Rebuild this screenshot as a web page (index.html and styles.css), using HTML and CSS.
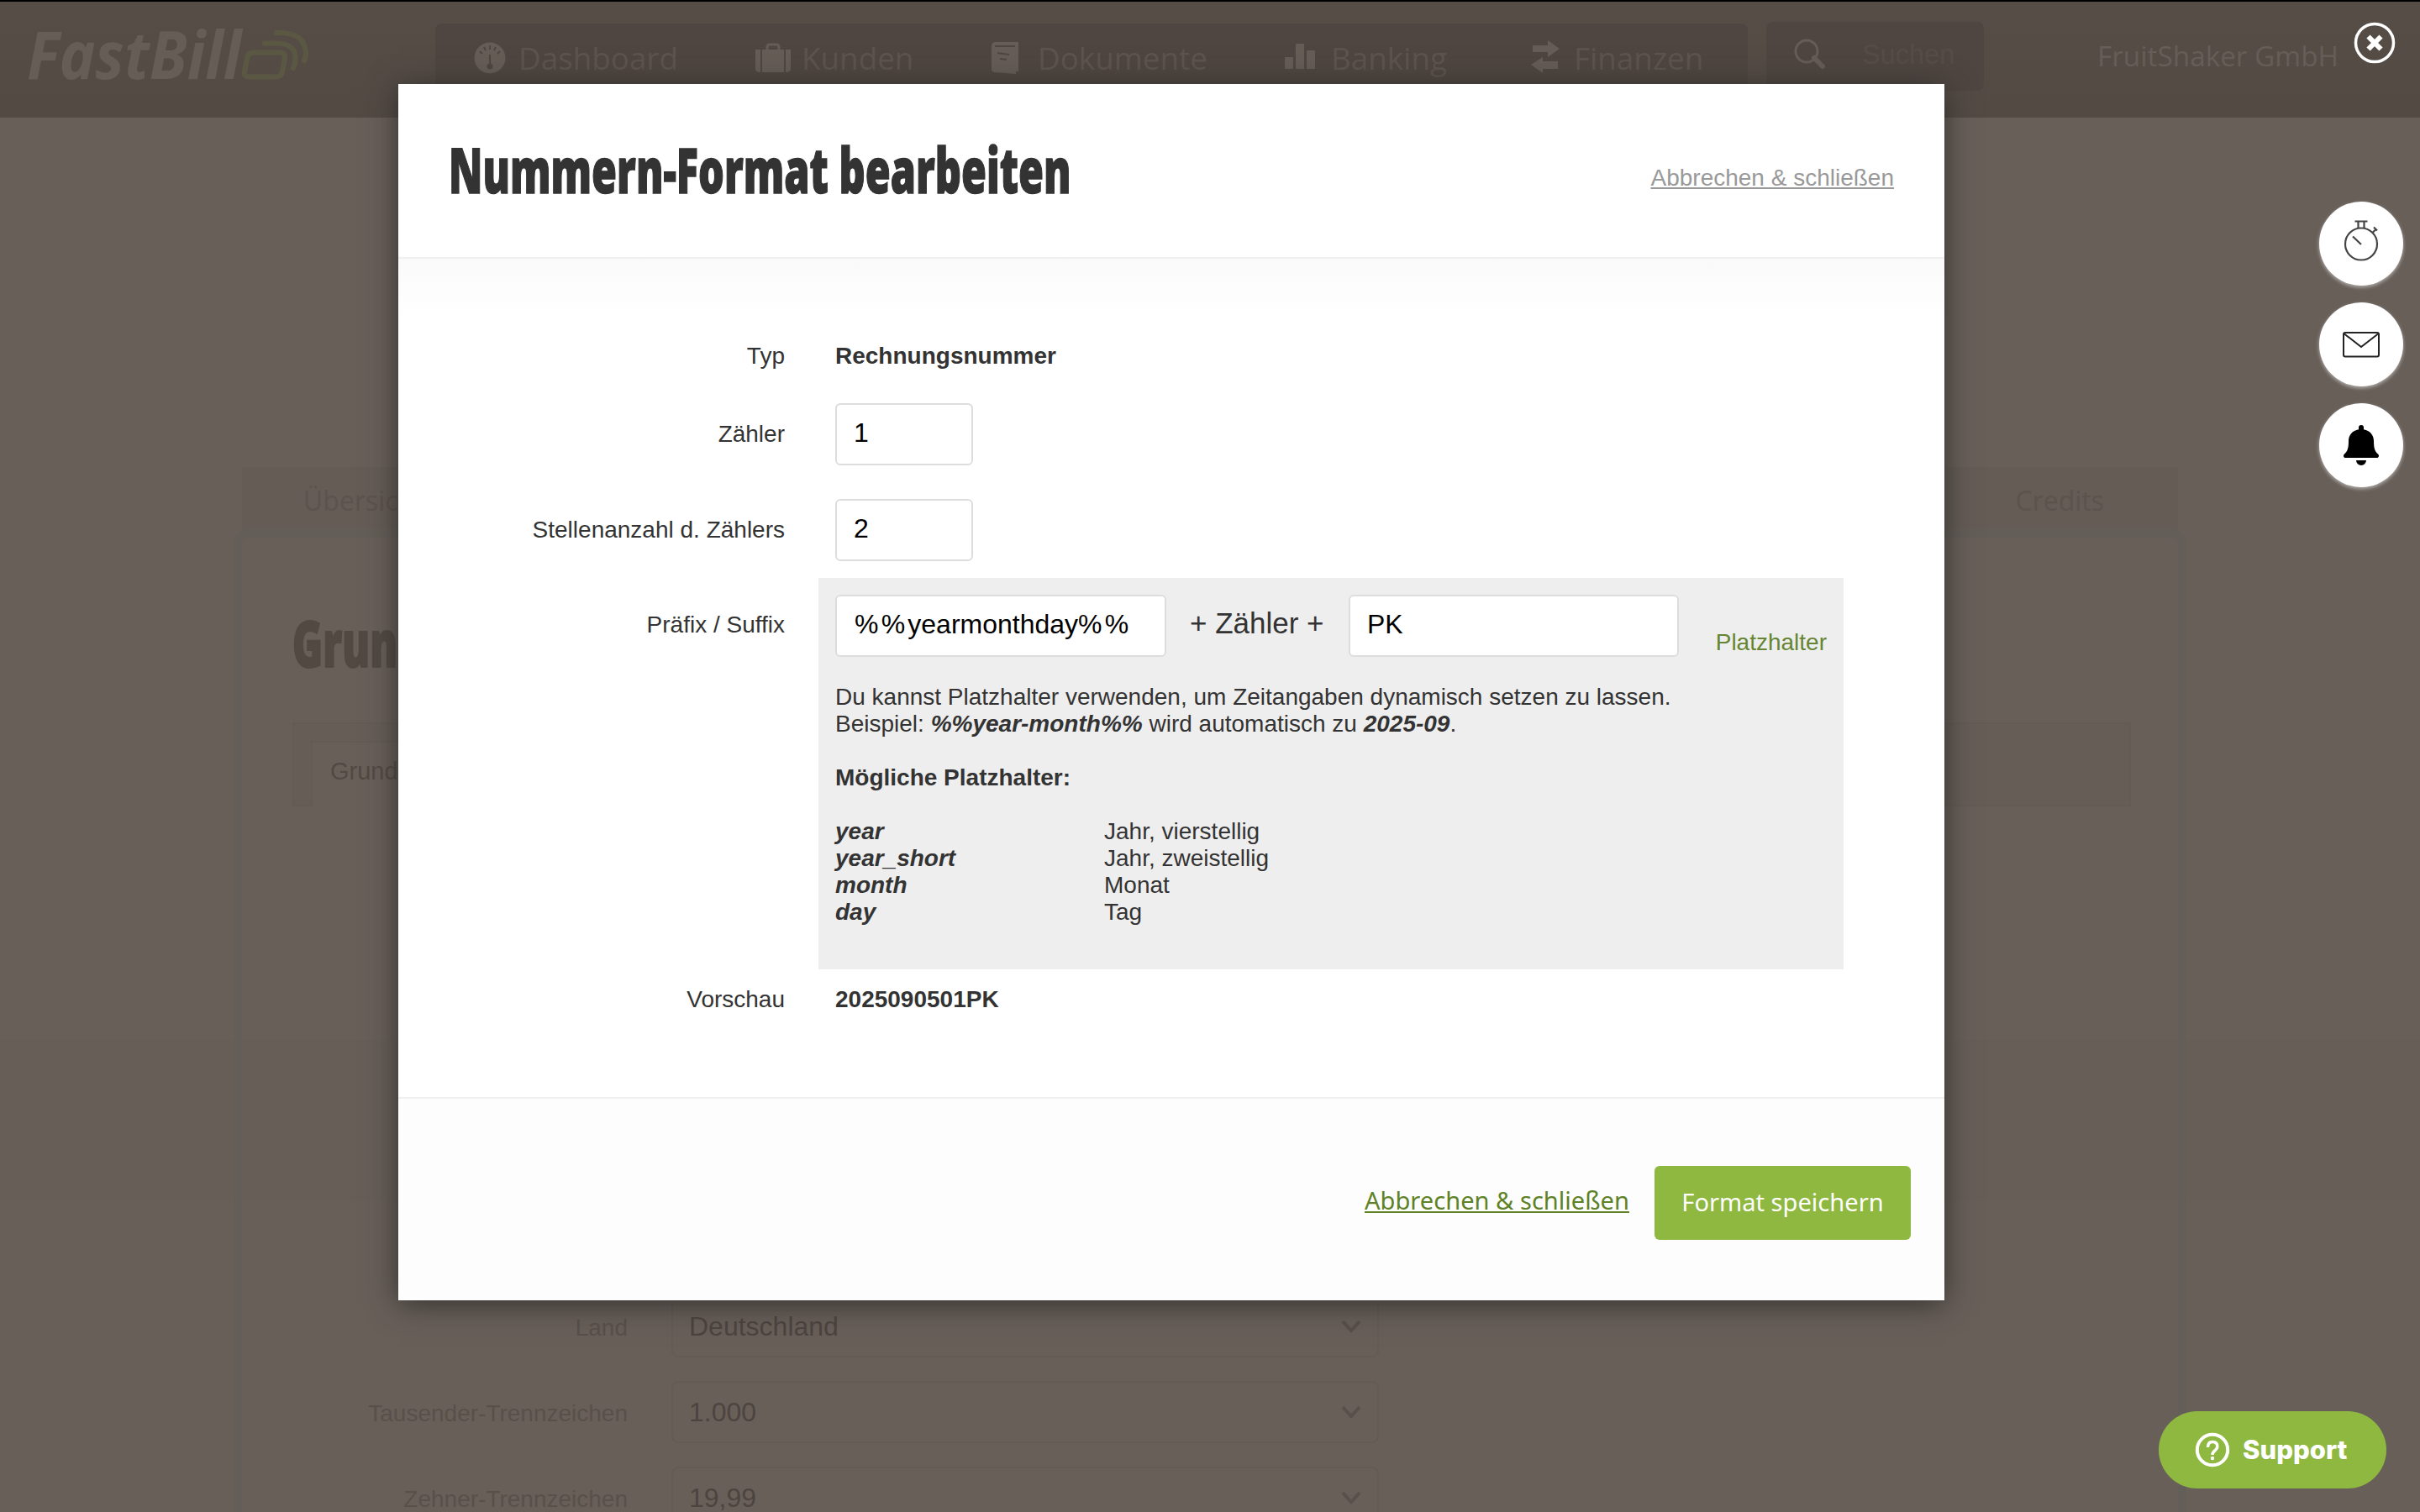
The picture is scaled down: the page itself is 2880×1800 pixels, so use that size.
FILE: index.html
```html
<!DOCTYPE html>
<html lang="de">
<head>
<meta charset="utf-8">
<title>FastBill – Nummern-Format bearbeiten</title>
<link rel="stylesheet" href="styles.css">
</head>
<body>
<div class="page">
  <header class="topbar">
    <div class="logo">
      <span class="logo-box"><span class="logo-text">FastBill</span></span>
      <svg class="logo-mark" width="84" height="64" viewBox="0 0 84 64" fill="none" stroke="#5a5842" stroke-width="6.200" stroke-linecap="round">
        <path d="M15 29.500h31q7 0 6 7l-3 16q-1 6-8 6H10q-7 0-6-6l3-16q1-7 8-7z"/>
        <path d="M28 18.500h13q25 0 23.500 20-.5 6-2.500 9.500"/><path d="M42 6h8q26 2 27 24 0 6-2 9"/>
      </svg>
    </div>
    <nav class="mainnav">
      <a class="nav-item n1"><svg width="38" height="38" viewBox="0 0 38 38"><circle cx="19" cy="19" r="18.500" fill="#665d57"/><g stroke="#4f4641" stroke-width="2"><path d="M19 4v5M12 6l2 4M26 6l-2 4M7 11l3 3M31 11l-3 3M19 15v14"/></g><circle cx="19" cy="29" r="3.500" fill="#4f4641"/></svg><span>Dashboard</span></a>
      <a class="nav-item n2"><svg width="42" height="38" viewBox="0 0 42 38" fill="#665d57"><path d="M0 9h6v27H5q-5 0-5-4zM8 9h26v27H8zM36 9h6v23q0 4-5 4h-1z"/><path d="M14 9V6q0-3 3-3h8q3 0 3 3v3" fill="none" stroke="#665d57" stroke-width="3"/></svg><span>Kunden</span></a>
      <a class="nav-item n3"><svg width="32" height="38" viewBox="0 0 32 38"><path d="M5 0h27v35h-3v3L4 36q-4 0-4-4V5q0-5 5-5z" fill="#665d57"/><path d="M4 5l24 0M7 13l14 2M10 20l8 1" stroke="#4f4641" stroke-width="2"/></svg><span>Dokumente</span></a>
      <a class="nav-item n4"><svg width="36" height="38" viewBox="0 0 36 38" fill="#665d57"><rect y="18" width="10" height="14" rx="1"/><rect x="13" y="2" width="10" height="30" rx="1"/><rect x="26" y="10" width="10" height="22" rx="1"/></svg><span>Banking</span></a>
      <a class="nav-item n5"><svg width="34" height="40" viewBox="0 0 34 40" fill="#665d57"><path d="M2 6h18V0l14 10-14 10v-6H2zM32 25H14v-5L0 29l14 10v-5h18z"/></svg><span>Finanzen</span></a>
    </nav>
    <div class="search">
      <svg width="38" height="38" viewBox="0 0 38 38" fill="none" stroke="#665d57"><circle cx="15" cy="15" r="13" stroke-width="3"/><path d="M24 23l10 10" stroke-width="6" stroke-linecap="round"/></svg>
      <span>Suchen</span>
    </div>
    <span class="account">FruitShaker GmbH</span>
  </header>

  <main class="panel-wrap">
    <div class="tabs"><span>Übersicht</span><span>Credits</span></div>
    <section class="panel">
      <h1 class="panel-title"><span>Grunddaten</span></h1>
      <div class="subtabs"><span class="subtab">Grunddaten</span></div>
      <div class="settings">
        <label>Land</label><div class="select">Deutschland<svg width="26" height="16" viewBox="0 0 26 16"><path d="M3 2l10 11L23 2"/></svg></div>
        <label>Tausender-Trennzeichen</label><div class="select">1.000<svg width="26" height="16" viewBox="0 0 26 16"><path d="M3 2l10 11L23 2"/></svg></div>
        <label>Zehner-Trennzeichen</label><div class="select">19,99<svg width="26" height="16" viewBox="0 0 26 16"><path d="M3 2l10 11L23 2"/></svg></div>
      </div>
    </section>
  </main>
</div>

<div class="modal">
  <div class="modal-head">
    <h2 class="modal-title"><span>Nummern-Format bearbeiten</span></h2>
    <a class="head-cancel">Abbrechen &amp; schließen</a>
  </div>
  <div class="modal-body">
    <div class="row"><label>Typ</label><div class="field"><b>Rechnungsnummer</b></div></div>
    <div class="row"><label>Zähler</label><div class="field"><div class="input small">1</div></div></div>
    <div class="row tall"><label>Stellenanzahl d. Zählers</label><div class="field"><div class="input small">2</div></div></div>
    <div class="row prefix-row">
      <label>Präfix / Suffix</label>
      <div class="box">
        <div class="box-inputs">
          <div class="input prefix"><span class="pct">%%</span>yearmonthday<span class="pct">%%</span></div>
          <span class="plus">+ Zähler +</span>
          <div class="input suffix">PK</div>
          <a class="placeholder-link">Platzhalter</a>
        </div>
        <p>Du kannst Platzhalter verwenden, um Zeitangaben dynamisch setzen zu lassen.<br>Beispiel: <b><i>%%year-month%%</i></b> wird automatisch zu <b><i>2025-09</i></b>.</p>
        <p><b>Mögliche Platzhalter:</b></p>
        <dl>
          <dt>year</dt><dd>Jahr, vierstellig</dd>
          <dt>year_short</dt><dd>Jahr, zweistellig</dd>
          <dt>month</dt><dd>Monat</dd>
          <dt>day</dt><dd>Tag</dd>
        </dl>
      </div>
    </div>
    <div class="row preview"><label>Vorschau</label><div class="field"><b>2025090501PK</b></div></div>
  </div>
  <div class="modal-foot">
    <a class="foot-cancel">Abbrechen &amp; schließen</a>
    <div class="save">Format speichern</div>
  </div>
</div>

<svg class="close" width="52" height="52" viewBox="0 0 52 52" fill="none" stroke="#fff"><circle cx="26" cy="26" r="22.500" stroke-width="3.500"/><path d="M18.500 18.500l15 15M33.500 18.500l-15 15" stroke-width="6"/></svg>

<aside class="floaters">
  <div class="fab"><svg class="watch" width="46" height="52" viewBox="0 0 46 52" fill="none" stroke="#444" stroke-width="2.200"><circle cx="23" cy="28.500" r="19"/><path d="M15.500 1.500h15M19.500 2v8M26.500 2v8M23 29L13 19.500M36.500 15l4-4M38 8.500l4 4"/></svg></div>
  <div class="fab"><svg width="46" height="32" viewBox="0 0 46 32" fill="none" stroke="#222" stroke-width="2"><rect x="2" y="2" width="42" height="28.500" rx="2"/><path d="M3 3.500l20 15.500L43 3.500"/></svg></div>
  <div class="fab"><svg width="42" height="48" viewBox="0 0 42 48"><path d="M21 0a3 3 0 0 1 3 3v2.200C31.500 6.500 36 12 36 19c0 8 1 12 5 15.500 2 2 .8 4.500-1.500 4.500h-37C.2 39-1 36.500 1 34.500 5 31 6 27 6 19 6 12 10.500 6.500 18 5.200V3a3 3 0 0 1 3-3zM15 42h12a6 6 0 0 1-12 0z"/></svg></div>
</aside>

<div class="support">
  <svg width="42" height="42" viewBox="0 0 42 42" fill="none" stroke="#fff"><circle cx="21" cy="21" r="18.200" stroke-width="4"/><path d="M15.500 18q0-6.500 5.700-6.500 5.600 0 5.600 5.500 0 2.500-3 5-2.800 2.200-2.800 5" stroke-width="3.500"/><circle cx="21" cy="31" r="2.200" fill="#fff" stroke="none"/></svg>
  <span>Support</span>
</div>
</body>
</html>
```
FILE: styles.css
```css
* { box-sizing: border-box; }
html, body { margin: 0; width: 2880px; height: 1800px; overflow: hidden; }
body {
  position: relative;
  background: #685f59;
  color: #333;
  font: 28px/32px "Liberation Sans", Arial, sans-serif;
}
h1, h2, p, dl, dd { margin: 0; }
svg { display: block; flex: none; }
.page { height: 1800px; overflow: hidden; background: linear-gradient(#685f59 0 1239px, #665d57 1239px 1241px, #675e58 1241px 1430px, #685f59 1430px); }

.topbar {
  display: flex;
  height: 140px;
  padding: 26px 0 0 32px;
  border-top: 2px solid #000;
  background: linear-gradient(#564d47, #534a44);
  font-family: "Open Sans", "Noto Sans", sans-serif;
}
.logo { display: flex; width: 486px; height: 80px; padding-top: 4px; }
.logo-box { width: 255px; height: 64px; line-height: 64px; }
.logo-text {
  display: inline-block;
  color: #665d57;
  font-size: 78px;
  font-style: italic;
  font-weight: 700;
  white-space: nowrap;
  transform-origin: 0 50%;
  transform: scaleX(.93);
}
.logo-mark { margin-top: 1px; }
.mainnav {
  display: flex;
  width: 1562px;
  height: 90px;
  border-radius: 8px;
  background: #4f4641;
}
.nav-item { display: flex; color: #5d544e; font-size: 36.800px; line-height: 82px; white-space: nowrap; }
.nav-item svg { margin-top: 22px; }
.n1 { width: 335px; padding-left: 46px; gap: 15px; }
.n2 { width: 280px; padding-left: 46px; gap: 13px; }
.n3 { width: 350px; padding-left: 47px; gap: 23px; }
.n4 { width: 293px; padding-left: 46px; gap: 19px; }
.n5 { padding-left: 46px; gap: 17px; }
.n5 svg { margin-top: 20px; }
.search {
  display: flex;
  width: 259px;
  height: 82px;
  margin: -2px 135px 0 22px;
  padding-left: 33px;
  gap: 43px;
  border-radius: 8px;
  background: #4f4641;
  color: #564d48;
  font-family: "Liberation Sans", Arial, sans-serif;
  font-size: 32.500px;
  line-height: 78px;
}
.search svg { margin-top: 20px; }
.account { color: #665d57; font-size: 33.300px; line-height: 76px; white-space: nowrap; }

.panel-wrap { width: 2304px; margin: 416px auto 0; }
.tabs {
  display: flex;
  justify-content: space-between;
  height: 84px;
  padding: 0 88px 0 73px;
  background: #655c56;
  color: #5c534d;
  font: 32px/80px "Open Sans", "Noto Sans", sans-serif;
}
.panel { height: 1200px; padding: 0 56px 0 60px; box-shadow: 0 0 0 10px #645e58; border-radius: 8px 8px 0 0; }
.panel-title { height: 220px; padding-top: 85px; font: 800 76px/80px "Open Sans", sans-serif; color: #524943; white-space: nowrap; }
.panel-title span { display: inline-block; transform: scaleX(.645); transform-origin: 0 50%; -webkit-text-stroke: 2px; }
.subtabs { height: 100px; padding: 20px 0 0 20px; border: 2px solid #645b55; background: #665d57; }
.subtab { display: block; width: 220px; height: 78px; padding: 18px 0 0 21px; border: solid #645b55; border-width: 2px 0 0 2px; background: #685f59; color: #524943; font-size: 29px; }
.settings { display: grid; grid-template-columns: 399px 842px; grid-auto-rows: 74px; gap: 28px 52px; margin-top: 582px; }
.settings label { color: #59504a; line-height: 78px; text-align: right; }
.select {
  display: flex;
  align-items: center;
  justify-content: space-between;
  padding: 0 18px 0 19px;
  border: 2px solid #645b55;
  border-radius: 8px;
  color: #4d443f;
  font-size: 32px;
}
.select svg { fill: none; stroke: #58504a; stroke-width: 4; }

.modal {
  position: absolute;
  left: 474px;
  top: 100px;
  width: 1840px;
  height: 1448px;
  background: #fff;
  box-shadow: 0 4px 34px rgba(44, 44, 42, .9);
}
.modal-head {
  display: flex;
  justify-content: space-between;
  height: 208px;
  padding: 0 60px;
  border-bottom: 2px solid #f0f0f0;
}
.modal-title { width: 740px; font: 800 74px/204px "Open Sans", sans-serif; white-space: nowrap; }
.modal-title span { display: inline-block; transform: scaleX(.656); transform-origin: 0 50%; -webkit-text-stroke: 1.500px; }
.head-cancel { margin-top: 96px; color: #999; text-decoration: underline; }
.modal-body {
  height: 998px;
  padding-top: 78px;
  background: linear-gradient(#fafafa, #fff 72px);
}
.row { display: grid; grid-template-columns: 460px 1fr; column-gap: 60px; line-height: 76px; height: 94px; }
.row label { text-align: right; line-height: 74px; }
.row:first-child label { line-height: 76px; }
.row.tall { margin-top: 20px; }
.input {
  height: 74px;
  padding-left: 20px;
  border: 2px solid #ddd;
  border-radius: 6px;
  background: #fff;
  color: #000;
  font-size: 32px;
  line-height: 67px;
}
.small { width: 164px; }
.prefix-row { height: 466px; column-gap: 40px; }
.prefix-row label { padding-top: 20px; line-height: 72px; }
.box { width: 1220px; height: 466px; padding: 20px; background: #eee; line-height: 32px; }
.box-inputs { display: flex; height: 106px; }
.prefix { width: 394px; padding-left: 21px; white-space: nowrap; }
.pct { letter-spacing: 3.200px; }
.plus { width: 218px; padding-left: 28px; font-size: 35px; line-height: 67px; white-space: nowrap; }
.suffix { width: 393px; margin-left: -1px; }
.placeholder-link { margin: 41px 0 0 auto; color: #668533; }
.box p { margin-bottom: 32px; white-space: nowrap; }
dl { display: grid; grid-template-columns: 320px 1fr; }
dt { font-weight: 700; font-style: italic; }
.preview, .preview label { line-height: 71px; }
.modal-foot {
  display: flex;
  justify-content: flex-end;
  height: 242px;
  padding: 80px 40px 0;
  gap: 30px;
  border-top: 2px solid #f0f0f0;
  background: #fdfdfd;
  font: 29.100px/86px "Noto Sans", sans-serif;
  white-space: nowrap;
}
.foot-cancel { color: #5e8225; line-height: 83px; text-decoration: underline; }
.save { width: 305px; height: 88px; border-radius: 6px; background: #8fb840; color: #fff; text-align: center; }

.close { position: absolute; left: 2800px; top: 25px; }
.floaters { position: absolute; left: 2760px; top: 240px; display: grid; gap: 20px; }
.fab {
  display: flex;
  align-items: center;
  justify-content: center;
  width: 100px;
  height: 100px;
  border-radius: 50%;
  background: #fff;
  box-shadow: 0 2px 4px rgba(255, 255, 255, .5);
}
.watch { margin-bottom: 4px; }
.support {
  position: absolute;
  left: 2569px;
  top: 1680px;
  display: flex;
  align-items: center;
  width: 271px;
  height: 92px;
  padding-left: 43px;
  gap: 15px;
  border-radius: 46px;
  background: #8fb840;
  color: #fff;
  font: 800 31px/92px Inter, sans-serif;
}
```
